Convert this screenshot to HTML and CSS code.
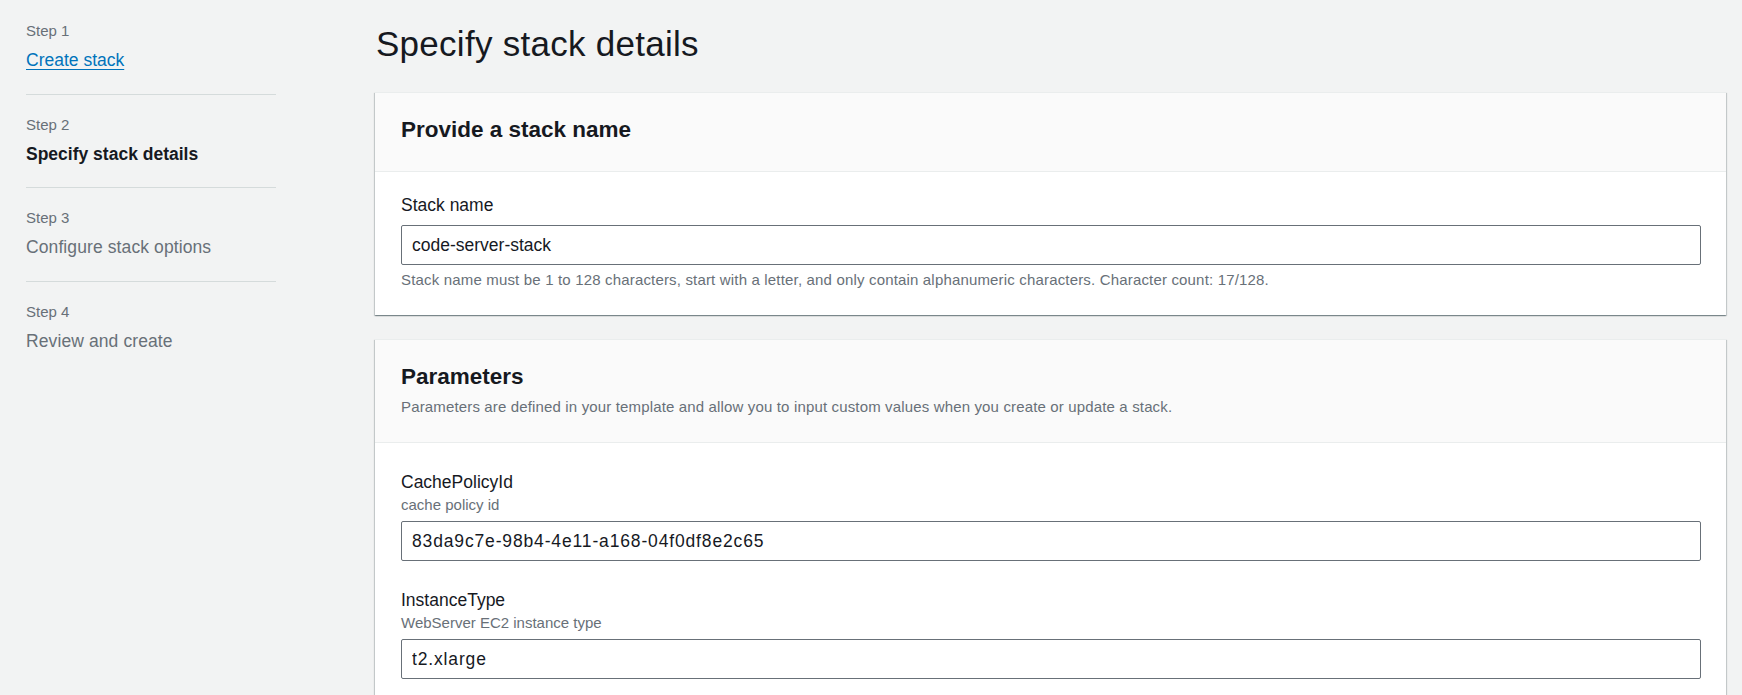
FILE: index.html
```html
<!DOCTYPE html>
<html lang="en">
<head>
<meta charset="utf-8">
<title>Specify stack details</title>
<link rel="stylesheet" href="styles.css">
</head>
<body>
<div class="layout">
  <nav class="steps">
    <div class="step">
      <div class="step-num">Step 1</div>
      <a class="step-title step-link" href="#">Create stack</a>
    </div>
    <div class="step">
      <div class="step-num">Step 2</div>
      <div class="step-title step-current">Specify stack details</div>
    </div>
    <div class="step">
      <div class="step-num">Step 3</div>
      <div class="step-title step-disabled">Configure stack options</div>
    </div>
    <div class="step">
      <div class="step-num">Step 4</div>
      <div class="step-title step-disabled">Review and create</div>
    </div>
  </nav>
  <main class="main">
    <h1 class="page-title">Specify stack details</h1>

    <section class="card">
      <header class="card-header">
        <h2 class="card-title">Provide a stack name</h2>
      </header>
      <div class="card-body">
        <label class="field-label" for="stackname">Stack name</label>
        <input class="text-input" id="stackname" type="text" value="code-server-stack">
        <div class="field-help">Stack name must be 1 to 128 characters, start with a letter, and only contain alphanumeric characters. Character count: 17/128.</div>
      </div>
    </section>

    <section class="card">
      <header class="card-header card-header-desc">
        <h2 class="card-title">Parameters</h2>
        <div class="card-desc">Parameters are defined in your template and allow you to input custom values when you create or update a stack.</div>
      </header>
      <div class="card-body card-body-params">
        <div class="param">
          <label class="field-label" for="cachepolicy">CachePolicyId</label>
          <div class="field-desc">cache policy id</div>
          <input class="text-input text-input-param" id="cachepolicy" type="text" value="83da9c7e-98b4-4e11-a168-04f0df8e2c65">
        </div>
        <div class="param">
          <label class="field-label" for="instancetype">InstanceType</label>
          <div class="field-desc">WebServer EC2 instance type</div>
          <input class="text-input text-input-param" id="instancetype" type="text" value="t2.xlarge">
        </div>
      </div>
    </section>
  </main>
</div>
</body>
</html>
```

FILE: styles.css
```css
* { box-sizing: border-box; }

html, body {
  margin: 0;
  padding: 0;
  background: #f2f3f3;
  color: #16191f;
  font-family: "Liberation Sans", Arial, sans-serif;
  height: 100%;
  overflow: hidden;
}

.layout {
  display: flex;
  align-items: flex-start;
}

.steps {
  flex: none;
  width: 250px;
  margin-left: 26px;
  padding-top: 1px;
}

.step {
  padding: 20px 0 20.5px;
  border-bottom: 1px solid #d5dbdb;
  display: flex;
  flex-direction: column;
  align-items: flex-start;
}

.step:last-child {
  border-bottom: none;
}

.step-num {
  font-size: 15px;
  line-height: 20px;
  color: #687078;
  margin-bottom: 7px;
}

.step-title {
  font-size: 17.5px;
  line-height: 25px;
}

.step-link {
  color: #0073bb;
  text-decoration: underline;
  text-underline-offset: 3px;
  text-decoration-thickness: 1px;
}

.step-current {
  font-weight: bold;
  color: #16191f;
}

.step-disabled {
  color: #687078;
  letter-spacing: 0.1px;
}

.main {
  flex: 1;
  min-width: 0;
  margin-left: 99px;
  padding: 22px 16px 0 0;
}

.page-title {
  margin: 0 0 26px;
  font-size: 35px;
  line-height: 44px;
  font-weight: normal;
  letter-spacing: 0.27px;
  color: #16191f;
  padding-left: 1px;
}

.card {
  background: #fff;
  border-top: 1px solid #eaeded;
  box-shadow: 0 1px 1px 0 rgba(0, 28, 36, 0.3), 1px 1px 1px 0 rgba(0, 28, 36, 0.15), -1px 1px 1px 0 rgba(0, 28, 36, 0.15);
  margin-bottom: 24px;
}

.card-header {
  background: #fafafa;
  border-bottom: 1px solid #eaeded;
  padding: 22px 25px 26px 26px;
}

.card-header-desc {
  padding-bottom: 25px;
}

.card-title {
  margin: 0;
  font-size: 22.5px;
  line-height: 30px;
  font-weight: bold;
  color: #16191f;
}

.card-desc {
  margin-top: 5px;
  font-size: 15px;
  line-height: 20px;
  letter-spacing: 0.15px;
  color: #687078;
}

.card-body {
  padding: 21px 25px 25px 26px;
}

.card-body-params {
  padding-top: 27px;
}

.param + .param {
  margin-top: 27px;
}

.field-label {
  display: block;
  font-size: 17.5px;
  line-height: 25px;
  color: #16191f;
}

.field-desc {
  font-size: 15px;
  line-height: 20px;
  color: #687078;
}

.text-input {
  display: block;
  width: 100%;
  height: 40px;
  margin-top: 7px;
  padding: 0 10px;
  border: 1px solid #687078;
  border-radius: 2px;
  background: #fff;
  font-family: inherit;
  font-size: 17.5px;
  color: #16191f;
  outline: none;
}

.text-input-param {
  letter-spacing: 0.85px;
}

.field-desc + .text-input {
  margin-top: 6px;
}

.field-help {
  margin-top: 5px;
  font-size: 15px;
  line-height: 20px;
  letter-spacing: 0.17px;
  color: #687078;
}
```
